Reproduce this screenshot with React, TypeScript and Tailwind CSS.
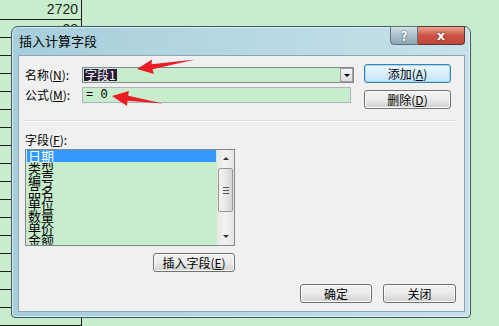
import React from "react";

function Btn({ children, w, def = false }: { children: React.ReactNode; w: string; def?: boolean }) {
  return (
    <div
      className={
        "flex h-[19px] items-center justify-center rounded-[3px] border text-[12px] leading-[14px] text-black " +
        w +
        (def
          ? " border-[#3c7fb1] bg-gradient-to-b from-[#eaf6fd] via-[#d9eef9] to-[#bee6fd] shadow-[inset_0_0_0_1px_#a7d8f3]"
          : " border-[#707070] bg-gradient-to-b from-[#f2f2f2] via-[#ebebeb] to-[#cfcfcf] shadow-[inset_0_0_0_1px_#fcfcfc]")
      }
    >
      {children}
    </div>
  );
}

export default function App() {
  const rows = Array.from({ length: 17 });
  const items = ["日期", "类型", "编号", "品名", "单位", "数量", "单价", "金额"];
  return (
    <div className="relative h-[326px] w-[499px] overflow-hidden bg-[#c7edcc] font-['Noto_Sans_CJK_SC',sans-serif] text-black">
      {/* spreadsheet column */}
      <div className="flex h-full w-[82px] flex-col border-r border-[#1e1e1e]">
        <div className="h-[20px] shrink-0 border-b border-[#1e1e1e] pr-[3px] text-right font-['Liberation_Sans',sans-serif] text-[14px] leading-[19px] text-[#222]">
          2720
        </div>
        <div className="h-[18px] shrink-0 border-b border-[#1e1e1e] pr-[3px] text-right font-['Liberation_Sans',sans-serif] text-[14px] leading-[18px] text-[#222]">
          28
        </div>
        {rows.map((_, i) => (
          <div key={i} className="h-[18px] shrink-0 border-b border-[#1e1e1e]" />
        ))}
      </div>

      {/* dialog window */}
      <div className="absolute left-[11px] top-[26px] flex h-[292px] w-[460px] flex-col rounded-b-[4px] rounded-t-[7px] border border-[#3f5866] bg-gradient-to-r from-[#a6cedb] via-[#b6d8e3] to-[#c6e1ea] pb-[5px] pl-[6px] pr-[5px] shadow-[inset_0_0_0_1px_rgba(255,255,255,0.55)]">
        {/* title bar */}
        <div className="flex h-[28px] shrink-0 items-start justify-between">
          <div className="pl-[1px] pt-[6px] text-[13px] leading-[16px] text-black">插入计算字段</div>
          <div className="-mt-px flex">
            <div className="flex h-[19px] w-[28px] items-center justify-center rounded-bl-[4px] border border-[#5d7382] bg-gradient-to-b from-[#d3e1e8] via-[#aabfcb] to-[#8fa7b4] text-[13px] font-bold leading-none text-white [text-shadow:0_0_2px_#2f3f4a]">
              ?
            </div>
            <div className="flex h-[19px] w-[47px] items-center justify-center rounded-br-[4px] border border-l-0 border-[#5a3430] bg-gradient-to-b from-[#e8a493] via-[#cc5344] to-[#c0473a] font-['DejaVu_Sans',sans-serif] text-[13px] font-bold leading-none text-white [text-shadow:0_0_2px_#4a1410]">
              x
            </div>
          </div>
        </div>

        {/* client area */}
        <div className="flex flex-1 flex-col border border-[#8ea4b0] bg-[#f0f0f0]">
          {/* top section */}
          <div className="flex pt-[7px]">
            <div className="ml-[6px] flex flex-col gap-[4px] pt-[4px]">
              <div className="flex h-[16px] items-center">
                <div className="w-[57px] text-[12px] leading-[14px]">
                  名称(<span className="underline">N</span>):
                </div>
                <div className="flex h-[16px] w-[272px] items-stretch border border-[#828790] bg-[#c7edcc]">
                  <div className="flex flex-1 items-center pl-[1px]">
                    <span className="bg-[#2b1d38] px-[1px] text-[12px] leading-[12px] text-white">字段1</span>
                  </div>
                  <div className="flex w-[13px] items-center justify-center border border-[#a0a0a0] bg-gradient-to-b from-[#f4f4f4] to-[#dcdcdc]">
                    <div className="h-0 w-0 border-x-[3px] border-t-[3px] border-x-transparent border-t-black" />
                  </div>
                </div>
              </div>
              <div className="flex h-[16px] items-center">
                <div className="w-[57px] text-[12px] leading-[14px]">
                  公式(<span className="underline">M</span>):
                </div>
                <div className="flex h-[16px] w-[269px] items-center border border-[#a9b4bc] bg-[#c7edcc] pl-[3px] font-['Liberation_Mono',monospace] text-[12px] leading-[12px]">
                  = 0
                </div>
              </div>
            </div>
            <div className="ml-[10px] flex flex-col gap-[7px] pt-[1px]">
              <Btn w="w-[87px]" def>
                添加(<span className="underline">A</span>)
              </Btn>
              <Btn w="w-[87px]">
                删除(<span className="underline">D</span>)
              </Btn>
            </div>
          </div>

          {/* separator */}
          <div className="ml-[5px] mt-[11px] w-[434px] border-b border-t border-b-white border-t-[#d8dde0]" />

          {/* fields label */}
          <div className="ml-[6px] mt-[11px] text-[12px] leading-[14px]">
            字段(<span className="underline">F</span>):
          </div>

          {/* list box */}
          <div className="ml-[6px] mt-[2px] flex h-[97px] w-[210px] border border-[#828790] bg-[#c7edcc]">
            <div className="flex flex-1 flex-col overflow-hidden px-[1px]">
              {items.map((t, i) => (
                <div
                  key={t}
                  className={
                    "h-[12px] shrink-0 pl-[1px] text-[13px] leading-[12px] " +
                    (i === 0 ? "bg-[#3399ff] text-white" : "text-black")
                  }
                >
                  {t}
                </div>
              ))}
            </div>
            <div className="flex w-[17px] flex-col bg-gradient-to-r from-[#e6e6e6] via-[#f2f2f2] to-[#e6e6e6]">
              <div className="flex h-[17px] items-center justify-center">
                <div className="h-0 w-0 border-x-[3px] border-b-[3px] border-x-transparent border-b-[#333]" />
              </div>
              <div className="mx-[1px] mt-[1px] flex h-[44px] flex-col items-center justify-center gap-[2px] rounded-[2px] border border-[#979797] bg-gradient-to-r from-[#f3f3f3] via-[#e8e8e8] to-[#d4d4d4]">
                <div className="h-px w-[6px] bg-[#555]" />
                <div className="h-px w-[6px] bg-[#555]" />
                <div className="h-px w-[6px] bg-[#555]" />
              </div>
              <div className="flex-1" />
              <div className="flex h-[17px] items-center justify-center">
                <div className="h-0 w-0 border-x-[3px] border-t-[3px] border-x-transparent border-t-[#333]" />
              </div>
            </div>
          </div>

          {/* insert field */}
          <div className="ml-[134px] mt-[7px]">
            <Btn w="w-[82px]">
              插入字段(<span className="underline">E</span>)
            </Btn>
          </div>

          {/* bottom buttons */}
          <div className="ml-[281px] mt-[12px] flex gap-[11px]">
            <Btn w="w-[72px]">确定</Btn>
            <Btn w="w-[73px]">关闭</Btn>
          </div>
        </div>
      </div>

      {/* red annotation arrows */}
      <svg className="pointer-events-none absolute left-0 top-0" width="499" height="326" viewBox="0 0 499 326">
        <polygon points="137,69 152,59.5 151.5,64.2 195,59.5 152.4,69.2 154,74" fill="#ec1c24" />
        <polygon points="112,96 128.8,91 128.2,95.7 163,103.5 127.5,100.7 127,106" fill="#ec1c24" />
      </svg>
    </div>
  );
}
